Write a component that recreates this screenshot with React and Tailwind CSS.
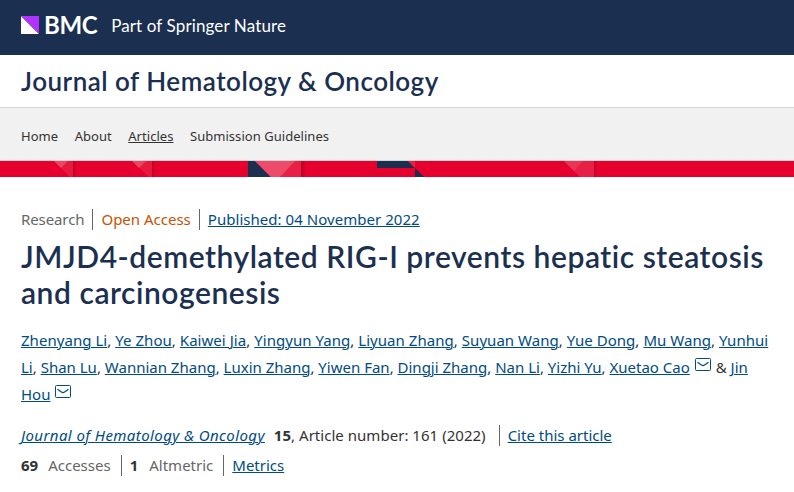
import React from "react";

const navLinks = ["Home", "About", "Articles", "Submission Guidelines"];

const authorLines = [
  {
    names: ["Zhenyang Li", "Ye Zhou", "Kaiwei Jia", "Yingyun Yang", "Liyuan Zhang", "Suyuan Wang", "Yue Dong", "Mu Wang"],
  },
  {
    names: ["Shan Lu", "Wannian Zhang", "Luxin Zhang", "Yiwen Fan", "Dingji Zhang", "Nan Li", "Yizhi Yu"],
  },
];

const MailIcon = () => (
  <svg className="ml-[5px] inline-block h-[14px] w-[17px] -translate-y-px align-baseline" viewBox="0 0 17 14" fill="none" stroke="#004b83">
    <rect x="0.5" y="0.5" width="15" height="12" rx="1" />
    <path d="M2.5 4.2 L6.4 7 Q8 8.2 9.6 7 L13.5 4.2" strokeWidth="1.2" />
  </svg>
);

const Names = ({ names }) =>
  names.map((name) => (
    <React.Fragment key={name}>
      <a href="#" className="text-[#004b83] underline decoration-1">{name}</a>
      {", "}
    </React.Fragment>
  ));

const Banner = () => (
  <svg className="block h-4 w-full" viewBox="0 0 794 16" preserveAspectRatio="none">
    <defs>
      <linearGradient id="shade">
        <stop offset="0" stopColor="#b80024" />
        <stop offset="1" stopColor="#e6002d" />
      </linearGradient>
    </defs>
    <rect width="794" height="16" fill="#e6002d" />
    <path d="M54 0H73V16H70Z" fill="#e8193f" />
    <path d="M54 0H68L61 7Z" fill="#ec4463" />
    <rect x="73" width="3" height="16" fill="url(#shade)" />
    <path d="M132 0H152V16H149Z" fill="#e8193f" />
    <path d="M132 0H146L139 7Z" fill="#ec4463" />
    <rect x="152" width="3" height="16" fill="url(#shade)" />
    <path d="M248 0H256L271 16H248Z" fill="#1b3051" />
    <path d="M255 0H301V16H271Z" fill="#e91f45" />
    <path d="M255 0H295L280 16H271Z" fill="#ed4b69" />
    <rect x="301" width="5" height="16" fill="url(#shade)" />
    <path d="M377 0H408L415 7H377Z" fill="#1b3051" />
    <path d="M408 0H415V7Z" fill="#e91f45" />
    <path d="M415 7L424 16H415Z" fill="#1b3051" />
    <path d="M564 0H594V16H580Z" fill="#e91f45" />
    <path d="M564 0H583L574 10Z" fill="#ea3556" />
    <rect x="594" width="3" height="16" fill="url(#shade)" />
  </svg>
);

const App = () => {
  return (
    <div className="h-[492px] w-[794px] overflow-hidden bg-white font-['Noto_Sans','Open_Sans',sans-serif] text-[15px] text-[#333]">
      <header className="flex h-[55px] items-center bg-[#1b3051] pl-[21px] font-[Lato,sans-serif] text-white">
        <svg className="-mt-[5px] h-[18px] w-[18px]" viewBox="0 0 18 18">
          <path d="M0 0V18H18Z" fill="#fff" />
          <path d="M0 0H18V18Z" fill="#b033ff" />
        </svg>
        <span className="-mt-[5px] ml-[5px] text-[24px] leading-none font-bold tracking-[-0.4px]">BMC</span>
        <span className="-mt-[4px] ml-[14px] text-[17px] leading-none tracking-[0.12px]">Part of Springer Nature</span>
      </header>

      <div className="h-[53px] border-b border-[#d5d5d5] pl-[21px] font-[Lato,sans-serif] text-[26px] leading-[52px] font-semibold tracking-[0.5px] text-[#1b3051]">
        Journal of Hematology &amp; Oncology
      </div>

      <nav className="flex h-[53px] gap-[16.5px] border-b border-[#d5d5d5] bg-[#f1f1f1] pt-[18px] pl-[21px] text-[13px] leading-5 tracking-[0.04px]">
        {navLinks.map((item) => (
          <a key={item} href="#" className={item === "Articles" ? "underline decoration-1" : ""}>
            {item}
          </a>
        ))}
      </nav>
      <Banner />

      <main className="pl-[21px]">
        <div className="flex items-center pt-8 leading-[21px]">
          <span className="border-r border-[#666] pr-2 tracking-[-0.1px] text-[#666]">Research</span>
          <span className="border-r border-[#666] px-2 text-[#c65301]">Open Access</span>
          <a href="#" className="ml-2 tracking-[0.04px] text-[#004b83] underline decoration-1">Published: 04 November 2022</a>
        </div>

        <h1 className="mt-2 font-[Lato,sans-serif] text-[30px] leading-[36px] font-semibold tracking-[0.54px] whitespace-nowrap text-[#1b3051]">
          JMJD4-demethylated RIG-I prevents hepatic steatosis
          <br />
          and carcinogenesis
        </h1>

        <div className="mt-[17px] leading-[27px] whitespace-nowrap">
          <div className="h-[27px] tracking-[0.04px]">
            <Names names={authorLines[0].names} />
            <a href="#" className="text-[#004b83] underline decoration-1">Yunhui</a>
          </div>
          <div className="h-[27px]">
            <a href="#" className="text-[#004b83] underline decoration-1">Li</a>{", "}
            <Names names={authorLines[1].names} />
            <a href="#" className="text-[#004b83]"><span className="underline decoration-1">Xuetao Cao</span><MailIcon /></a>
            {" & "}
            <a href="#" className="text-[#004b83] underline decoration-1">Jin</a>
          </div>
          <div className="h-[27px]">
            <a href="#" className="text-[#004b83]"><span className="underline decoration-1">Hou</span><MailIcon /></a>
          </div>
        </div>

        <div className="mt-[17px] flex leading-[21px]">
          <a href="#" className="tracking-[0.41px] text-[#004b83] italic underline decoration-1">Journal of Hematology &amp; Oncology</a>
          <span className="ml-[9px] border-r border-[#666] pr-[13px] tracking-[0.03px]">
            <b>15</b>, Article number: 161 (2022)
          </span>
          <a href="#" className="ml-2 text-[#004b83] underline decoration-1">Cite this article</a>
        </div>

        <div className="mt-[9px] flex leading-[21px]">
          <span className="border-r border-[#666] pr-[10px] text-[#666]">
            <b className="mr-[10px] text-[#333]">69</b>Accesses
          </span>
          <span className="border-r border-[#666] pr-[10px] pl-2 text-[#666]">
            <b className="mr-[11px] text-[#333]">1</b>Altmetric
          </span>
          <a href="#" className="ml-2 text-[#004b83] underline decoration-1">Metrics</a>
        </div>
      </main>
    </div>
  );
};

export default App;
